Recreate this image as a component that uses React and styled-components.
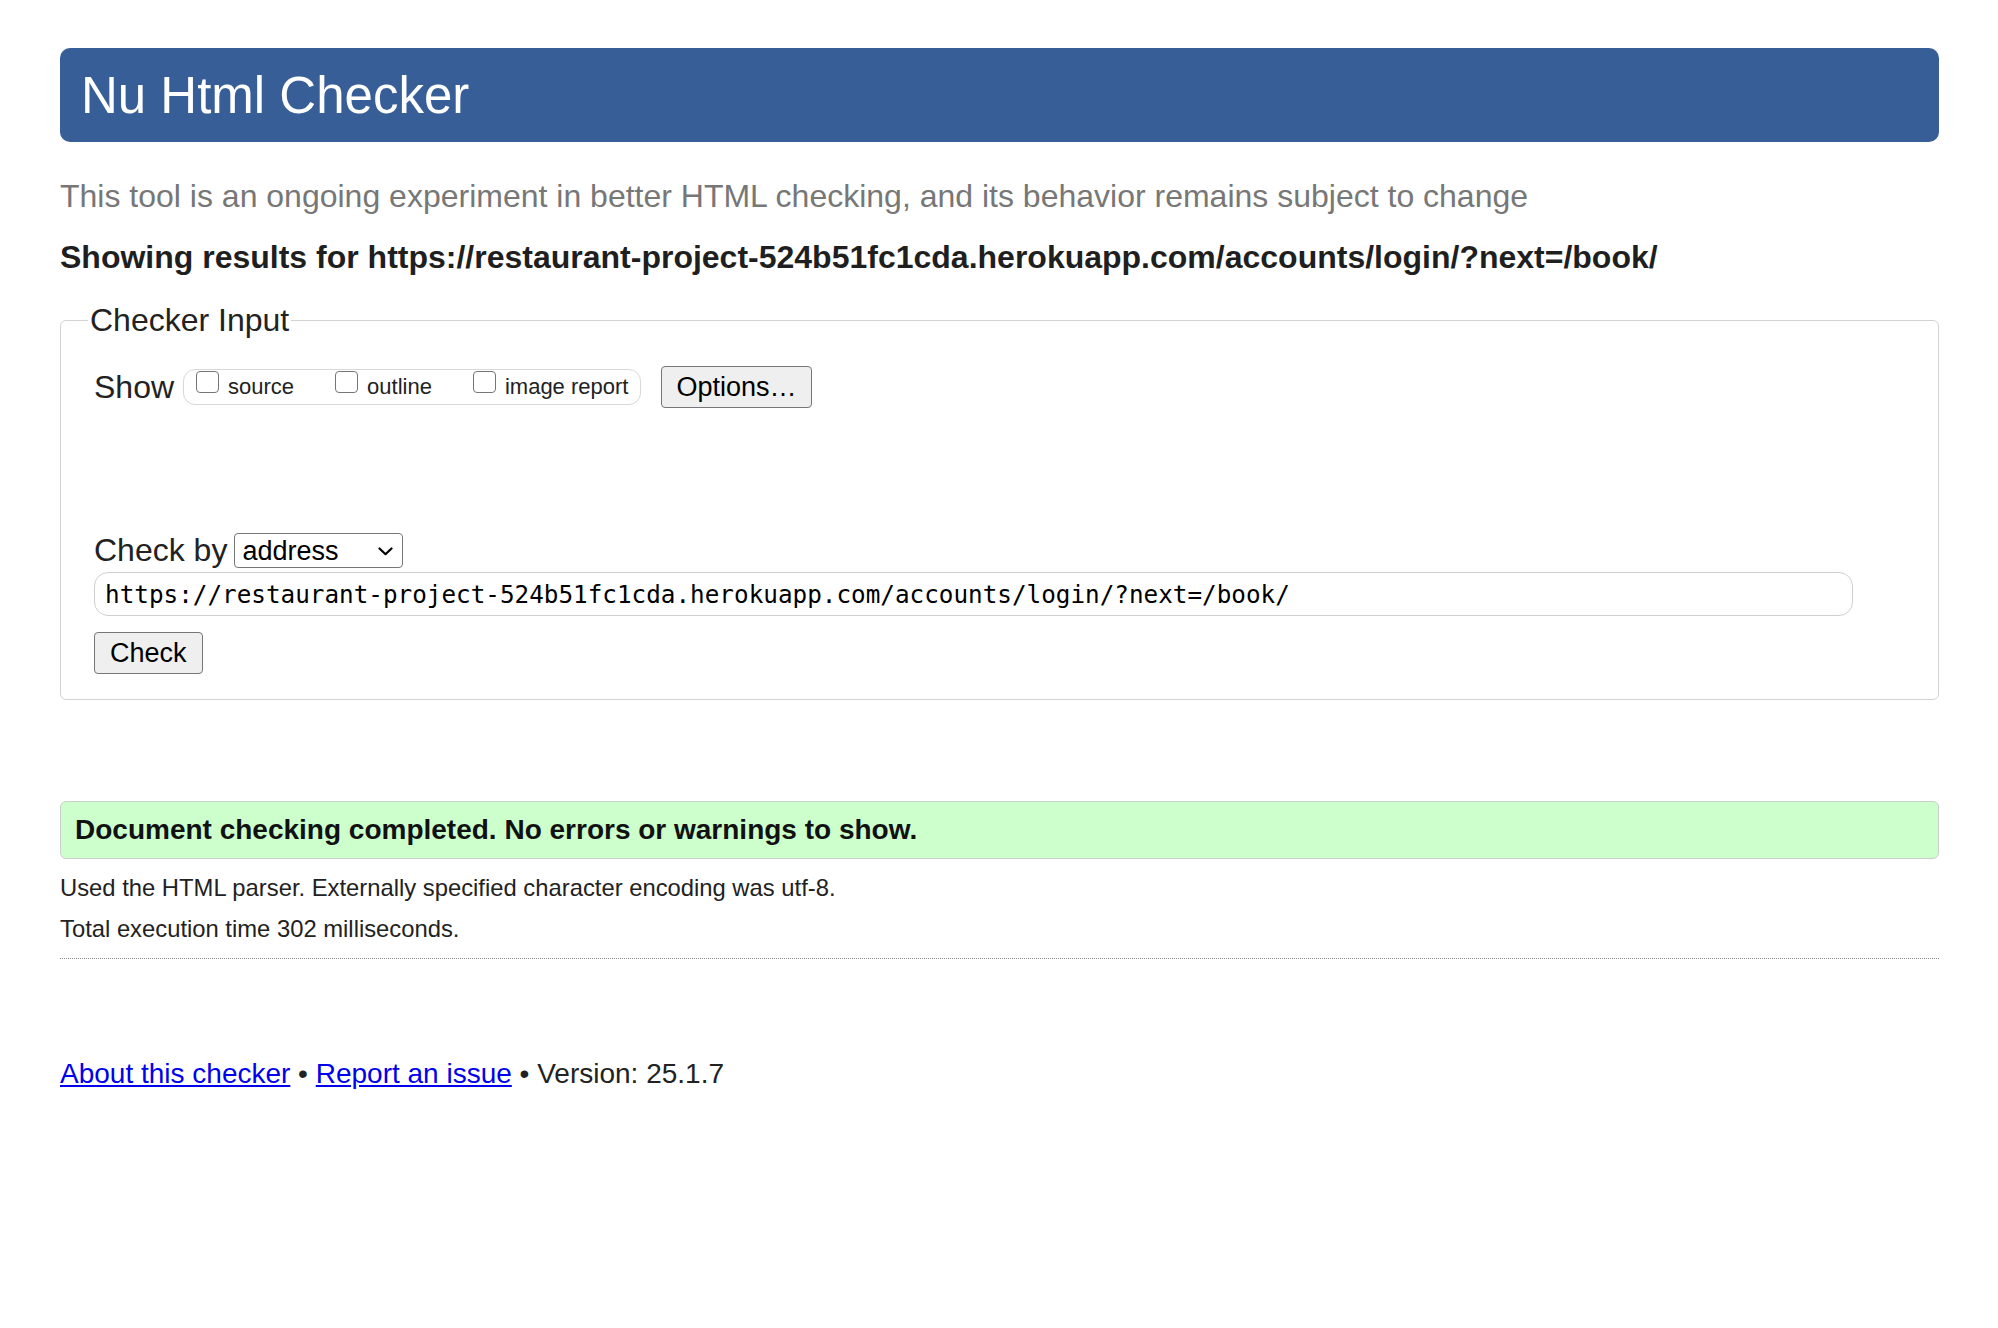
import React from 'react';
import styled, { createGlobalStyle } from 'styled-components';

const GlobalStyle = createGlobalStyle`
  html, body { margin: 0; padding: 0; background: #ffffff; }
  body {
    font-family: "Liberation Sans", Arial, sans-serif;
    color: #222;
  }
  * { box-sizing: border-box; }
`;

const Page = styled.div`
  padding: 48px 59px 120px 60px;
`;

const Banner = styled.h1`
  margin: 0;
  height: 94px;
  display: flex;
  align-items: center;
  padding-left: 21px;
  background: #375e97;
  color: #ffffff;
  border-radius: 10px;
  font-size: 51px;
  font-weight: normal;
  line-height: 1;
`;

const Tagline = styled.p`
  margin: 36px 0 0;
  font-size: 32px;
  line-height: 37px;
  color: #777777;
`;

const ResultsFor = styled.p`
  margin: 24px 0 0;
  font-size: 32px;
  line-height: 37px;
  font-weight: bold;
  color: #1f1f1f;
`;

const InputFieldset = styled.fieldset`
  margin: 26px 0 0;
  padding: 0 31px 25px 33px;
  border: 1px solid #d3d3d3;
  border-radius: 6px;
  min-width: 0;
`;

const Legend = styled.legend`
  padding: 0 2px;
  margin-left: -6px;
  font-size: 32px;
  line-height: 37px;
  color: #222;
`;

const Row = styled.div`
  display: flex;
  align-items: center;
  margin-top: ${(p) => p.$top || 0}px;
`;

const RowLabel = styled.span`
  font-size: 32px;
  line-height: 37px;
  color: #222;
`;

const OptionGroup = styled.div`
  display: flex;
  align-items: center;
  gap: 41px;
  height: 36px;
  margin-left: 9px;
  padding: 0 12px;
  border: 1px solid #d8d8d8;
  border-radius: 12px;
`;

const OptionItem = styled.label`
  display: flex;
  align-items: center;
  gap: 9px;
  font-size: 22px;
  line-height: 26px;
  color: #222;
`;

const Box = styled.input.attrs({ type: 'checkbox' })`
  appearance: none;
  -webkit-appearance: none;
  width: 23px;
  height: 22px;
  margin: 0 0 10px 0;
  border: 1.5px solid #767676;
  border-radius: 4px;
  background: #ffffff;
  flex: none;
`;

const PlainButton = styled.button`
  height: 42px;
  padding: 0 ${(p) => p.$pad || 14}px;
  margin-left: ${(p) => p.$left || 0}px;
  background: #efefef;
  border: 1px solid #767676;
  border-radius: 4px;
  font-family: "Liberation Sans", Arial, sans-serif;
  font-size: 27px;
  color: #000;
  line-height: 1;
`;

const BlockButton = styled(PlainButton)`
  display: block;
  margin-top: 16px;
`;

const SelectWrap = styled.div`
  position: relative;
  margin-left: 7px;
  width: 169px;
  height: 35px;
`;

const Select = styled.select`
  appearance: none;
  -webkit-appearance: none;
  width: 100%;
  height: 100%;
  padding: 0 0 0 7px;
  border: 1px solid #767676;
  border-radius: 4px;
  background: #ffffff;
  font-family: "Liberation Sans", Arial, sans-serif;
  font-size: 27px;
  color: #000;
`;

const Chevron = styled.svg`
  position: absolute;
  right: 10px;
  top: 14px;
  pointer-events: none;
`;

const UrlInput = styled.input`
  display: block;
  margin-top: 3px;
  width: calc(100% - 54px);
  height: 44px;
  padding: 0 10px;
  border: 1px solid #cfcfcf;
  border-radius: 14px;
  font-family: "DejaVu Sans Mono", "Liberation Mono", monospace;
  font-size: 24.3px;
  color: #000;
  background: #fff;
`;

const SuccessBox = styled.div`
  margin-top: 101px;
  height: 58px;
  display: flex;
  align-items: center;
  padding: 0 14px;
  background: #ccffcc;
  border: 1px solid #c9cfc9;
  border-radius: 6px;
  font-size: 28px;
  font-weight: bold;
  color: #111;
`;

const Note = styled.p`
  margin: ${(p) => p.$top}px 0 0;
  font-size: 23.8px;
  line-height: 27px;
  color: #222;
`;

const Divider = styled.hr`
  margin: 16px 0 0;
  border: 0;
  border-top: 1px dotted #8a8a8a;
  height: 0;
`;

const Footer = styled.p`
  margin: 99px 0 0;
  font-size: 28px;
  line-height: 32px;
  color: #222;
`;

const FooterLink = styled.a`
  color: #0000ee;
  text-decoration: underline;
`;

const url = 'https://restaurant-project-524b51fc1cda.herokuapp.com/accounts/login/?next=/book/';

export default function App() {
  return (
    <>
      <GlobalStyle />
      <Page>
        <Banner>Nu Html Checker</Banner>
        <Tagline>
          This tool is an ongoing experiment in better HTML checking, and its behavior remains subject to change
        </Tagline>
        <ResultsFor>Showing results for {url}</ResultsFor>

        <InputFieldset>
          <Legend>Checker Input</Legend>
          <Row $top={27}>
            <RowLabel>Show</RowLabel>
            <OptionGroup>
              <OptionItem><Box />source</OptionItem>
              <OptionItem><Box />outline</OptionItem>
              <OptionItem><Box />image report</OptionItem>
            </OptionGroup>
            <PlainButton $left={20} $pad={14}>Options…</PlainButton>
          </Row>

          <Row $top={124}>
            <RowLabel>Check by</RowLabel>
            <SelectWrap>
              <Select defaultValue="address">
                <option value="address">address</option>
                <option value="upload">file upload</option>
                <option value="text">text input</option>
              </Select>
              <Chevron width="15" height="9" viewBox="0 0 15 9">
                <path d="M1.5 1.5 L7.5 7.2 L13.5 1.5" fill="none" stroke="#000" strokeWidth="2.2" strokeLinecap="round" strokeLinejoin="round" />
              </Chevron>
            </SelectWrap>
          </Row>
          <UrlInput type="url" defaultValue={url} />
          <BlockButton $pad={15}>Check</BlockButton>
        </InputFieldset>

        <SuccessBox>Document checking completed. No errors or warnings to show.</SuccessBox>
        <Note $top={15}>Used the HTML parser. Externally specified character encoding was utf-8.</Note>
        <Note $top={14}>Total execution time 302 milliseconds.</Note>
        <Divider />

        <Footer>
          <FooterLink href="#about">About this checker</FooterLink> • <FooterLink href="#issue">Report an issue</FooterLink> • Version: 25.1.7
        </Footer>
      </Page>
    </>
  );
}
